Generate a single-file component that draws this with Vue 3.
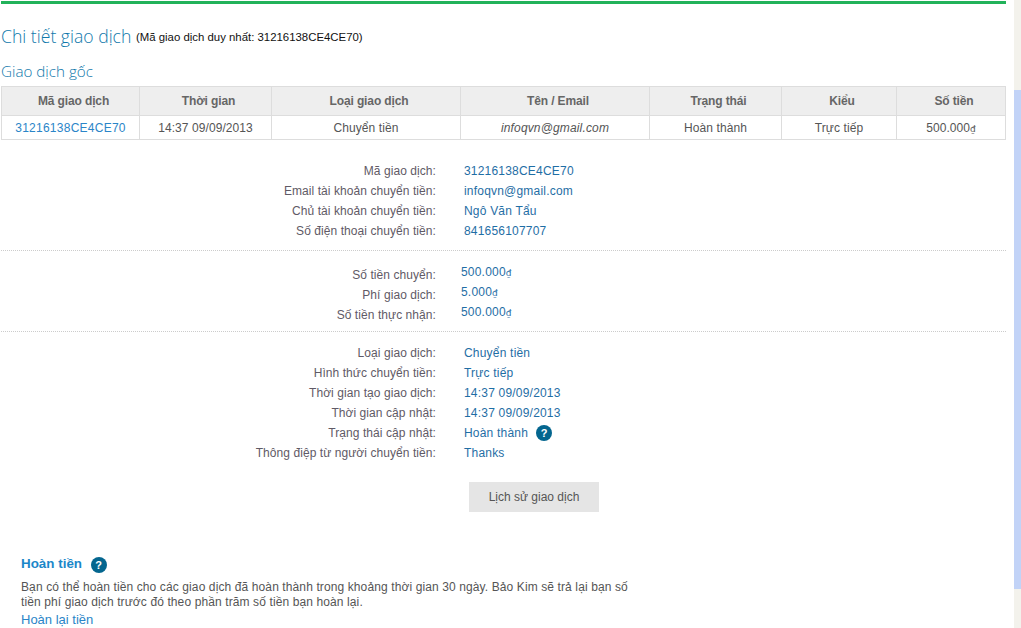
<script setup>
const columns = ['Mã giao dịch', 'Thời gian', 'Loại giao dịch', 'Tên / Email', 'Trạng thái', 'Kiểu', 'Số tiền']
const account = [
  ['Mã giao dịch:', '31216138CE4CE70'],
  ['Email tài khoản chuyển tiền:', 'infoqvn@gmail.com'],
  ['Chủ tài khoản chuyển tiền:', 'Ngô Văn Tẩu'],
  ['Số điện thoại chuyển tiền:', '841656107707'],
]
const money = [
  ['Số tiền chuyển:', '500.000'],
  ['Phí giao dịch:', '5.000'],
  ['Số tiền thực nhận:', '500.000'],
]
const details = [
  ['Loại giao dịch:', 'Chuyển tiền'],
  ['Hình thức chuyển tiền:', 'Trực tiếp'],
  ['Thời gian tạo giao dịch:', '14:37 09/09/2013'],
  ['Thời gian cập nhật:', '14:37 09/09/2013'],
  ['Trạng thái cập nhật:', 'Hoàn thành', true],
  ['Thông điệp từ người chuyển tiền:', 'Thanks'],
]
</script>

<template>
  <div class="page">
    <main class="main">
      <div class="topbar"></div>
      <h1 class="title">Chi tiết giao dịch <small>(Mã giao dịch duy nhất: 31216138CE4CE70)</small></h1>
      <h2 class="subtitle">Giao dịch gốc</h2>
      <table class="tx">
        <colgroup>
          <col class="c1" /><col class="c2" /><col class="c3" /><col class="c3" /><col class="c2" /><col class="c6" /><col />
        </colgroup>
        <thead>
          <tr><th v-for="c in columns" :key="c">{{ c }}</th></tr>
        </thead>
        <tbody>
          <tr>
            <td class="link">31216138CE4CE70</td>
            <td>14:37 09/09/2013</td>
            <td>Chuyển tiền</td>
            <td class="em">infoqvn@gmail.com</td>
            <td>Hoàn thành</td>
            <td>Trực tiếp</td>
            <td>500.000<span class="dong">₫</span></td>
          </tr>
        </tbody>
      </table>

      <section class="block first">
        <div v-for="r in account" :key="r[0]" class="row">
          <span class="label">{{ r[0] }}</span><span class="value">{{ r[1] }}</span>
        </div>
      </section>
      <section class="block second">
        <div v-for="r in money" :key="r[0]" class="row">
          <span class="label">{{ r[0] }}</span><span class="value money">{{ r[1] }}<span class="dong">₫</span></span>
        </div>
      </section>
      <section class="block third">
        <div v-for="r in details" :key="r[0]" class="row">
          <span class="label">{{ r[0] }}</span>
          <span class="value">{{ r[1] }}</span>
          <span v-if="r[2]" class="help inline">?</span>
        </div>
      </section>

      <div class="actions"><button class="btn" type="button">Lịch sử giao dịch</button></div>

      <section class="refund">
        <h3 class="refund-title">Hoàn tiền <span class="help">?</span></h3>
        <p class="refund-text">Bạn có thể hoàn tiền cho các giao dịch đã hoàn thành trong khoảng thời gian 30 ngày. Bảo Kim sẽ trả lại bạn số tiền phí giao dịch trước đó theo phần trăm số tiền bạn hoàn lại.</p>
        <a class="refund-link">Hoàn lại tiền</a>
      </section>
    </main>
    <aside class="scrollbar"><div class="thumb"></div></aside>
  </div>
</template>

<style scoped>
.page {
  display: flex;
  justify-content: space-between;
  width: 1021px;
  height: 628px;
  overflow: hidden;
  background: #fff;
  font-family: "Liberation Sans", Arial, sans-serif;
  font-size: 12px;
  color: #555;
}
.main {
  width: 1005px;
  margin-left: 1px;
  padding-top: 1px;
}
.topbar { height: 3px; background: #22b25a; }
.title {
  margin: 20px 0 0;
  height: 24px;
  line-height: 24px;
  font-family: "Open Sans", sans-serif;
  font-size: 17.6px;
  font-weight: 300;
  color: #0f78ab;
}
.title small {
  font-family: "Liberation Sans", sans-serif;
  font-size: 11.4px;
  font-weight: 400;
  color: #111;
  vertical-align: 2px;
}
.subtitle {
  margin: 13px 0 0;
  height: 20px;
  line-height: 20px;
  font-family: "Open Sans", sans-serif;
  font-size: 15.2px;
  font-weight: 300;
  color: #0f78ab;
}
.tx {
  margin-top: 5px;
  width: 1005px;
  table-layout: fixed;
  border-collapse: collapse;
  border: 1px solid #ddd;
}
.c1 { width: 138px; }
.c2 { width: 132px; }
.c3 { width: 189px; }
.c6 { width: 115px; }
.tx th, .tx td { border: 1px solid #ddd; text-align: center; padding: 0; }
.tx th { height: 28px; padding-left: 6px; background: #eee; font-weight: 700; color: #666; letter-spacing: -0.12px; }
.tx td { height: 23px; color: #555; letter-spacing: 0.08px; }
.tx td.link { color: #2a85c8; letter-spacing: 0.25px; }
.tx td.em { font-style: italic; letter-spacing: 0.15px; }
.dong { font-family: "DejaVu Sans", sans-serif; font-size: 9px; letter-spacing: 0; }
.block { border-bottom: 1px dotted #ccc; }
.first { margin-top: 21px; padding-bottom: 9px; }
.second { padding-top: 14px; padding-bottom: 6px; }
.third { padding-top: 11px; border-bottom: 0; }
.row { display: flex; align-items: center; height: 20px; line-height: 20px; }
.label { width: 435px; text-align: right; color: #5f5a66; letter-spacing: 0.07px; }
.value { margin-left: 28px; color: #1f6ea5; letter-spacing: 0.2px; }
.money { margin-left: 25px; position: relative; top: -3px; }
.help {
  display: inline-flex;
  align-items: center;
  justify-content: center;
  width: 16px;
  height: 16px;
  border-radius: 50%;
  background: #04668f;
  color: #fff;
  font-size: 11px;
  font-weight: 700;
  vertical-align: -1px;
}
.help.inline { margin-left: 8px; }
.actions { margin-top: 19px; padding-left: 468px; }
.btn {
  display: block;
  width: 130px;
  height: 30px;
  border: 0;
  padding: 0;
  background: #e5e5e5;
  font-family: inherit;
  font-size: 12px;
  color: #555;
}
.refund { margin-top: 42px; padding-left: 20px; width: 612px; }
.refund-title {
  margin: 0;
  height: 20px;
  line-height: 20px;
  font-size: 13.4px;
  font-weight: 700;
  color: #1b87c9;
}
.refund-title .help { margin-left: 5px; font-size: 11px; }
.refund-text { margin: 6px 0 0; line-height: 15px; color: #555; letter-spacing: 0.11px; }
.refund-link { display: block; margin-top: 2px; line-height: 16px; font-size: 13px; color: #2a85c8; }
.scrollbar { width: 7px; height: 628px; background: #f3f2ec; }
.thumb { margin-top: 90px; height: 499px; background: #c2d3f7; }
</style>

<style>
html, body { margin: 0; overflow: hidden; }
</style>
